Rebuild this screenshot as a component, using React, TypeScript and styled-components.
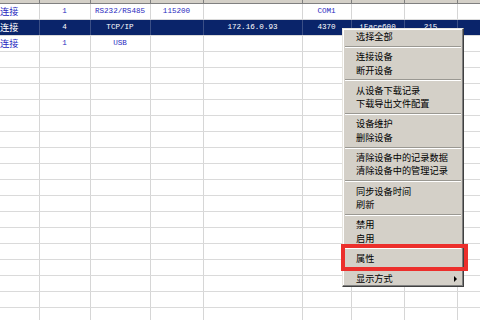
import React from 'react';
import styled, { createGlobalStyle } from 'styled-components';

const GlobalStyle = createGlobalStyle`
  html, body {
    margin: 0;
    padding: 0;
    background: #ffffff;
    overflow: hidden;
  }
`;

const columns = [39, 51, 60, 53, 99, 49, 53, 53, 40];

type Row = { cells: string[]; selected?: boolean };

const rows: Row[] = [
  { cells: ['连接', '1', 'RS232/RS485', '115200', '', 'COM1', '', '', ''] },
  { cells: ['连接', '4', 'TCP/IP', '', '172.16.0.93', '4370', 'iFace600', '215', ''], selected: true },
  { cells: ['连接', '1', 'USB', '', '', '', '', '', ''] },
];
while (rows.length < 20) rows.push({ cells: Array(9).fill('') });

const menuGroups: string[][] = [
  ['选择全部'],
  ['连接设备', '断开设备'],
  ['从设备下载记录', '下载导出文件配置'],
  ['设备维护', '删除设备'],
  ['清除设备中的记录数据', '清除设备中的管理记录'],
  ['同步设备时间', '刷新'],
  ['禁用', '启用'],
  ['属性'],
  ['显示方式'],
];

const Screen = styled.div`
  position: relative;
  width: 480px;
  height: 320px;
  overflow: hidden;
  background: #ffffff;
`;

const Grid = styled.table`
  border-collapse: collapse;
  table-layout: fixed;
  width: 497px;
`;

const HeadCell = styled.th`
  height: 3px;
  padding: 0;
  background: #d4d0c8;
  border-right: 1px solid #808080;
  border-bottom: 1px solid #808080;
`;

const Cell = styled.td<{ $selected?: boolean; $latin?: boolean; $first?: boolean }>`
  height: 15px;
  padding: 0;
  border-right: 1px solid ${p => (p.$selected ? '#3b4f86' : '#d6d6d6')};
  border-bottom: 1px solid #dadada;
  background: ${p => (p.$selected ? '#0a246a' : '#ffffff')};
  color: ${p => (p.$selected ? '#ffffff' : '#2a2ac0')};
  font-family: ${p => (p.$latin ? '"Liberation Mono", monospace' : '"Noto Sans CJK SC", sans-serif')};
  font-size: ${p => (p.$latin ? '7.6px' : '9.2px')};
  line-height: 15px;
  text-align: ${p => (p.$first ? 'left' : 'center')};
  white-space: nowrap;
  overflow: hidden;
`;

const Menu = styled.div`
  position: absolute;
  left: 342px;
  top: 28px;
  width: 122px;
  box-sizing: border-box;
  padding: 1px 0;
  background: #d4d0c8;
  border: 1px solid;
  border-color: #e8e6e0 #404040 #404040 #e8e6e0;
  box-shadow: inset -1px -1px 0 #808080, inset 1px 1px 0 #ffffff;
  font-family: "Noto Sans CJK SC", sans-serif;
  font-size: 9.2px;
  color: #000000;
`;

const Item = styled.div<{ $marked?: boolean }>`
  position: relative;
  height: 13.3px;
  line-height: 13.3px;
  padding-left: 13px;
  white-space: nowrap;
`;

const Separator = styled.div`
  height: 7px;
  margin: 0 2px;
  display: flex;
  flex-direction: column;
  justify-content: center;
  &::before {
    content: '';
    height: 1px;
    background: #9a9892;
  }
  &::after {
    content: '';
    height: 1px;
    background: #ffffff;
  }
`;

const Arrow = styled.span`
  position: absolute;
  right: 6px;
  top: 4px;
  width: 0;
  height: 0;
  border-top: 3px solid transparent;
  border-bottom: 3px solid transparent;
  border-left: 3px solid #000000;
`;

const Highlight = styled.div`
  position: absolute;
  left: -2px;
  right: -5px;
  top: -8px;
  bottom: -6px;
  border: 4px solid #ec2f2c;
  box-sizing: border-box;
  pointer-events: none;
`;

const isLatin = (s: string) => /^[\x00-\x7f]+$/.test(s);

export default function App() {
  return (
    <Screen>
      <GlobalStyle />
      <Grid>
        <colgroup>
          {columns.map((w, i) => (
            <col key={i} style={{ width: w }} />
          ))}
        </colgroup>
        <thead>
          <tr>
            {columns.map((_, i) => (
              <HeadCell key={i} />
            ))}
          </tr>
        </thead>
        <tbody>
          {rows.map((row, r) => (
            <tr key={r}>
              {row.cells.map((c, i) => (
                <Cell key={i} $selected={row.selected} $latin={c !== '' && isLatin(c)} $first={i === 0}>
                  {c}
                </Cell>
              ))}
            </tr>
          ))}
        </tbody>
      </Grid>
      <Menu>
        {menuGroups.map((group, g) => (
          <React.Fragment key={g}>
            {g > 0 && <Separator />}
            {group.map(label => (
              <Item key={label}>
                {label}
                {label === '显示方式' && <Arrow />}
                {label === '属性' && <Highlight />}
              </Item>
            ))}
          </React.Fragment>
        ))}
      </Menu>
    </Screen>
  );
}
